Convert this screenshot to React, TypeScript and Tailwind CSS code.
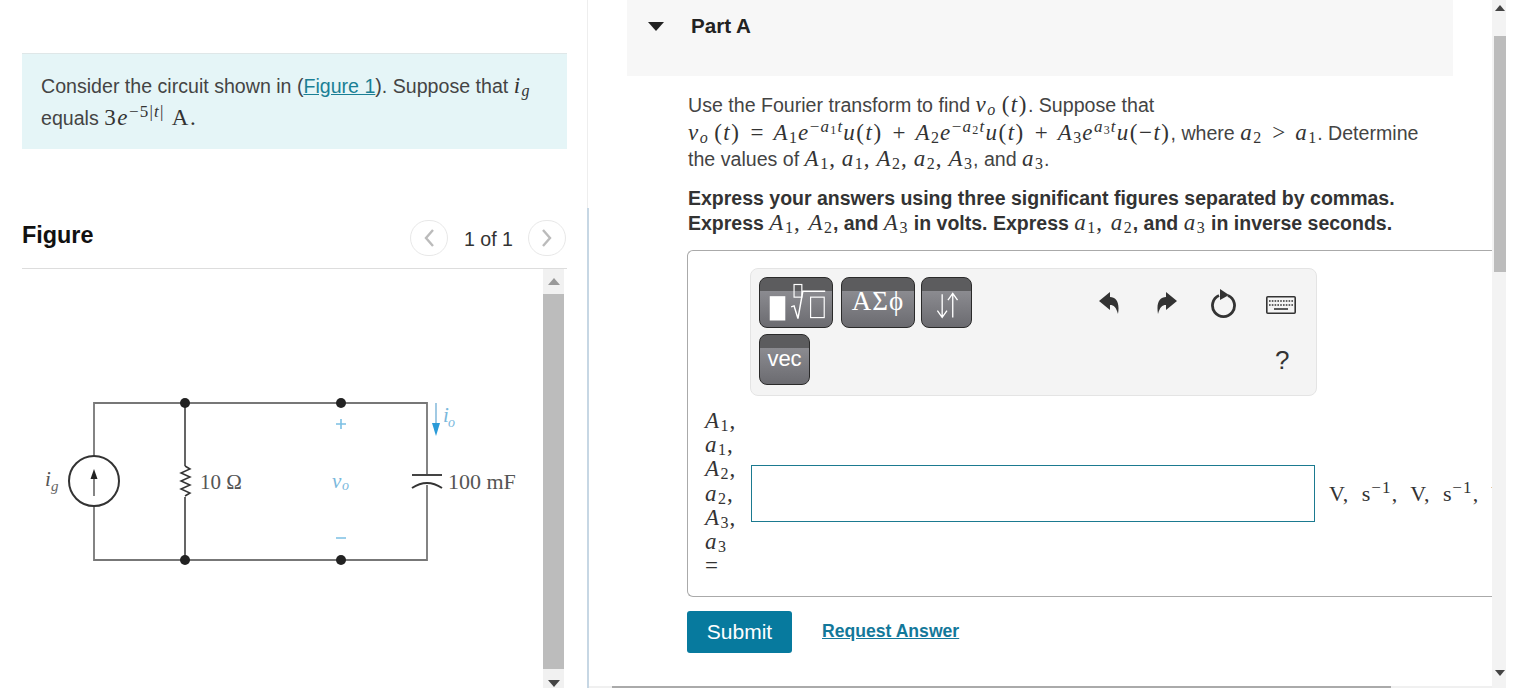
import type { ReactNode } from 'react'

const serif = 'font-["Liberation_Serif",serif]'

function V({ children }: { children: ReactNode }) {
  return <i className={`${serif} text-[23px] tracking-[1.5px] font-normal text-[#333]`}>{children}</i>
}

function Sub({ children }: { children: ReactNode }) {
  return <span className={`${serif} text-[16px] font-normal align-[-3px] leading-none tracking-[1px] text-[#333]`}>{children}</span>
}

function Sup({ children }: { children: ReactNode }) {
  return <span className={`${serif} text-[17px] font-normal align-[8px] leading-none tracking-[1.2px] text-[#333]`}>{children}</span>
}

function R({ children }: { children: ReactNode }) {
  return <span className={`${serif} text-[23px] font-normal tracking-[1.5px] text-[#333]`}>{children}</span>
}

function Op({ children }: { children: ReactNode }) {
  return <span className={`${serif} text-[23px] font-normal mx-[10px] text-[#333]`}>{children}</span>
}

function A({ n }: { n: number }) {
  return (
    <>
      <V>A</V>
      <Sub>{n}</Sub>
    </>
  )
}

function Al({ n }: { n: number }) {
  return (
    <>
      <V>a</V>
      <Sub>{n}</Sub>
    </>
  )
}

function Exp({ minus, n }: { minus?: boolean; n: number }) {
  return (
    <Sup>
      {minus ? '−' : ''}
      <i>a</i>
      <span className="text-[12px] align-[-2px]">{n}</span>
      <i>t</i>
    </Sup>
  )
}

function Comma() {
  return <R>,&nbsp;</R>
}

function Circuit() {
  return (
    <svg viewBox="22 269 521 419" width="521" height="419" className="block">
      <g fill="none" stroke="#777" strokeWidth="1.8">
        <path d="M94 456V403H427V475M427 485V560H94V506" />
        <path d="M185 403V466M185 497V560" stroke="#555" />
      </g>
      <circle cx="94" cy="481" r="25" fill="none" stroke="#333" strokeWidth="2" />
      <path d="M94 496V476" stroke="#666" strokeWidth="1.6" />
      <path d="M94 469l-3.5 10h7z" fill="#222" />
      <path d="M185 466l5 3-9 4 9 4-9 4 9 4-9 4 9 4-5 3" fill="none" stroke="#333" strokeWidth="1.5" />
      <g fill="#222">
        <circle cx="185" cy="403" r="5" />
        <circle cx="341" cy="403" r="5" />
        <circle cx="185" cy="560" r="5" />
        <circle cx="341" cy="560" r="5" />
      </g>
      <path d="M412 475H442" stroke="#444" strokeWidth="2" />
      <path d="M412 488Q427 478 442 488" fill="none" stroke="#333" strokeWidth="2" />
      <path d="M436 403V428" stroke="#7ab4d8" strokeWidth="1.4" />
      <path d="M432 423h8l-4 13z" fill="#2b9bd8" />
      <path d="M336 424h10M341 419v10M336 538h10" stroke="#7cc0e4" strokeWidth="1.6" />
      <g fontFamily="Liberation Serif, serif">
        <text x="45" y="486" fontSize="21" fontStyle="italic" fill="#555">i</text>
        <text x="51" y="491" fontSize="15" fontStyle="italic" fill="#666">g</text>
        <text x="200" y="489" fontSize="21" fill="#555">10 Ω</text>
        <text x="448" y="489" fontSize="22" fill="#555">100 mF</text>
        <text x="332" y="488" fontSize="21" fontStyle="italic" fill="#79b8dc">v</text>
        <text x="342" y="490" fontSize="14" fontStyle="italic" fill="#79b8dc">o</text>
        <text x="443" y="422" fontSize="21" fontStyle="italic" fill="#79b8dc">i</text>
        <text x="448" y="427" fontSize="14" fontStyle="italic" fill="#79b8dc">o</text>
      </g>
    </svg>
  )
}

function ToolButton({ wide, children }: { wide?: boolean; children: ReactNode }) {
  return (
    <div
      className={`${wide ? 'w-[74px]' : 'w-[51px]'} h-[51px] shrink-0 rounded-[8px] border border-[#2a2a2a] bg-[linear-gradient(#5c5c5e_0,#5c5c5e_26%,#8b8b90_27%,#6b6b70_100%)] flex items-center justify-center text-white overflow-hidden`}
    >
      {children}
    </div>
  )
}

function Toolbar() {
  return (
    <div className="ml-[62px] mt-[17px] w-[567px] h-[128px] rounded-[8px] border border-[#e4e4e4] bg-[#f4f4f4] flex">
      <div className="pl-[8px] pt-[8px] w-[340px]">
        <div className="flex gap-[6px]">
          <ToolButton wide>
            <svg viewBox="0 0 74 51" width="74" height="51">
              <rect x="10" y="19" width="16" height="25" fill="#fff" />
              <path d="M32 30l3-1 4 13 5-28h23" fill="none" stroke="#fff" strokeWidth="1.5" />
              <rect x="35" y="7" width="8" height="13" fill="none" stroke="#fff" strokeWidth="1.2" />
              <rect x="52" y="20" width="14" height="21" fill="none" stroke="#fff" strokeWidth="1.2" />
            </svg>
          </ToolButton>
          <div className="ml-[2px]">
            <ToolButton wide>
              <span className={`${serif} text-[27px] tracking-[1px] mb-[2px]`}>ΑΣϕ</span>
            </ToolButton>
          </div>
          <ToolButton>
            <svg viewBox="0 0 51 51" width="51" height="51">
              <path d="M21 17V40M16 34l5 7 5-7M32 41V17M27 23l5-7 5 7" fill="none" stroke="#fff" strokeWidth="1.4" />
            </svg>
          </ToolButton>
        </div>
        <div className="mt-[6px]">
          <ToolButton>
            <span className="font-['Liberation_Sans',sans-serif] text-[22px] mb-[2px]">vec</span>
          </ToolButton>
        </div>
      </div>
      <div className="flex-1 flex flex-col">
        <div className="h-[60px] flex items-center text-[#333]">
          <svg viewBox="0 0 20 22" width="20" height="22" className="ml-[8px] mt-[8px]" fill="#333">
            <path d="M0 9L11 0V5C17 5 21 10 19 22C17 15 15 13 11 13V18Z" />
          </svg>
          <svg viewBox="0 0 20 22" width="20" height="22" className="ml-[38px] mt-[8px]" fill="#333">
            <path d="M20 9L9 0V5C3 5-1 10 1 22C3 15 5 13 9 13V18Z" />
          </svg>
          <svg viewBox="0 0 26 30" width="26" height="30" className="ml-[34px] mt-[10px]" fill="none">
            <path d="M17 6.5A11 11 0 1 1 8 6.5" stroke="#333" strokeWidth="2.8" />
            <path d="M9 0l9 6-9 5z" fill="#333" />
          </svg>
          <svg viewBox="0 0 30 18" width="30" height="18" className="ml-[29px] mt-[12px]">
            <rect x="0.8" y="0.8" width="28.4" height="16.4" rx="1" fill="#f4f4f4" stroke="#333" strokeWidth="1.6" />
            <path d="M3 5h24M3 9h24" stroke="#333" strokeWidth="1.6" strokeDasharray="1.6 1.2" />
            <path d="M8 13h14" stroke="#333" strokeWidth="1.6" />
          </svg>
        </div>
        <div className="pl-[184px] mt-[4px] font-['Liberation_Sans',sans-serif] text-[26px] leading-[54px] text-[#333]">?</div>
      </div>
    </div>
  )
}

function MathLabel() {
  return (
    <div className="w-[46px] shrink-0 ml-[17px] flex flex-col text-[#333] leading-[24px]">
      <div className="h-[24.2px]"><A n={1} /><R>,</R></div>
      <div className="h-[24.2px]"><Al n={1} /><R>,</R></div>
      <div className="h-[24.2px]"><A n={2} /><R>,</R></div>
      <div className="h-[24.2px]"><Al n={2} /><R>,</R></div>
      <div className="h-[24.2px]"><A n={3} /><R>,</R></div>
      <div className="h-[24.2px]"><Al n={3} /></div>
      <div className="h-[24.2px]"><R>=</R></div>
    </div>
  )
}

export default function App() {
  return (
    <div className="flex h-[688px] w-[1534px] overflow-hidden bg-white font-['Liberation_Sans',sans-serif] text-[19.6px] text-[#444]">
      {/* left pane */}
      <aside className="w-[587px] shrink-0 flex flex-col pt-[53px]">
        <div className="ml-[22px] w-[545px] h-[96px] bg-[#e5f5f7] border-t border-[#dfe7e8] px-[19px] pt-[16px] leading-[32px]">
          <div className="h-[32px]">
            Consider the circuit shown in (<span className="text-[#1a7f95] underline">Figure 1</span>). Suppose that{' '}
            <V>i</V>
            <Sub><i>g</i></Sub>
          </div>
          <div className="h-[32px]">
            equals <R>3</R>
            <V>e</V>
            <Sup>−5|<i>t</i>|</Sup>
            <R>&nbsp;A.</R>
          </div>
        </div>
        <div className="ml-[22px] w-[545px] h-[120px] pt-[69px] border-b border-[#ddd] flex items-start justify-between">
          <h2 className="text-[23.4px] leading-[34px] font-bold text-[#111]">Figure</h2>
          <div className="flex items-center mr-[1px] mt-[1px]">
            <div className="w-[38px] h-[36px] rounded-full border border-[#e8e8e8] flex items-center justify-center">
              <svg viewBox="0 0 12 20" width="12" height="20" fill="none"><path d="M10 2L3 10l7 8" stroke="#bbb" strokeWidth="2.4" /></svg>
            </div>
            <span className="mx-[16px] text-[#333] leading-[36px] mt-[2px]">1 of 1</span>
            <div className="w-[38px] h-[36px] -ml-[1px] rounded-full border border-[#e8e8e8] flex items-center justify-center">
              <svg viewBox="0 0 12 20" width="12" height="20" fill="none"><path d="M2 2l7 8-7 8" stroke="#bbb" strokeWidth="2.4" /></svg>
            </div>
          </div>
        </div>
        <div className="flex ml-[22px] flex-1 min-h-0">
          <Circuit />
          <div className="w-[21px] h-full bg-[#f1f1f1] flex flex-col items-center">
            <div className="h-[25px] flex items-center justify-center">
              <div className="w-0 h-0 border-x-[6px] border-x-transparent border-b-[7px] border-b-[#999]" />
            </div>
            <div className="w-full h-[375px] bg-[#bcbcbc]" />
            <div className="flex-1 flex items-end pb-[1px]">
              <div className="w-0 h-0 border-x-[6px] border-x-transparent border-t-[7px] border-t-[#444]" />
            </div>
          </div>
        </div>
      </aside>

      {/* divider */}
      <div className="w-[2px] shrink-0 flex flex-col">
        <div className="h-[208px] border-l border-[#eeeeee]" />
        <div className="flex-1 bg-[#c7d7e4]" />
      </div>

      {/* right pane */}
      <main className="w-[903px] shrink-0 flex flex-col overflow-hidden">
        <div className="flex-1 min-h-0 overflow-hidden">
          <div className="ml-[38px] w-[826px] h-[76px] bg-[#f7f7f7] flex items-start">
            <div className="ml-[21px] mt-[22px] w-0 h-0 border-x-[8px] border-x-transparent border-t-[9px] border-t-[#222]" />
            <span className="ml-[27px] mt-[12px] font-bold text-[#222] text-[20.6px] leading-[28px]">Part A</span>
          </div>
          <div className="ml-[99px] mt-[15px] h-[81px] leading-[27px] whitespace-nowrap">
            <div className="h-[27px]">
              Use the Fourier transform to find <V>v</V><Sub><i>o</i></Sub> <R>(</R><V>t</V><R>)</R>. Suppose that
            </div>
            <div className="h-[27px]">
              <V>v</V><Sub><i>o</i></Sub> <R>(</R><V>t</V><R>)</R><Op>=</Op><A n={1} /><V>e</V><Exp minus n={1} />
              <V>u</V><R>(</R><V>t</V><R>)</R><Op>+</Op><A n={2} /><V>e</V><Exp minus n={2} />
              <V>u</V><R>(</R><V>t</V><R>)</R><Op>+</Op><A n={3} /><V>e</V><Exp n={3} />
              <V>u</V><R>(−</R><V>t</V><R>)</R>, where <Al n={2} /><Op>&gt;</Op><Al n={1} />. Determine
            </div>
            <div className="h-[27px]">
              the values of <A n={1} /><R>,</R> <Al n={1} /><R>,</R> <A n={2} /><R>,</R> <Al n={2} /><R>,</R> <A n={3} />, and <Al n={3} />.
            </div>
          </div>
          <div className="ml-[99px] mt-[14px] h-[50px] font-bold text-[#333] text-[19.5px] whitespace-nowrap">
            <div className="h-[25px] leading-[25px]">Express your answers using three significant figures separated by commas.</div>
            <div className="h-[25px] leading-[23px]">
              Express <A n={1} /><Comma /><A n={2} />, and <A n={3} /> in volts. Express <Al n={1} /><Comma /><Al n={2} />, and <Al n={3} /> in inverse seconds.
            </div>
          </div>

          {/* answer box */}
          <div className="ml-[98px] mt-[14px] w-[805px] h-[347px] rounded-l-[6px] border border-r-0 border-[#aaa] overflow-hidden">
            <Toolbar />
            <div className="flex items-center mt-[13px] w-[900px]">
              <MathLabel />
              <div className="w-[564px] h-[57px] shrink-0 border border-[#1b7a90] bg-white" />
              <div className={`${serif} ml-[14px] text-[22px] text-[#333] whitespace-nowrap tracking-[0.8px]`}>
                V,&nbsp; s<Sup>−1</Sup>,&nbsp; V,&nbsp; s<Sup>−1</Sup>,&nbsp; V,&nbsp; s<Sup>−1</Sup>
              </div>
            </div>
          </div>

          <div className="ml-[98px] mt-[14px] flex items-center">
            <button className="w-[105px] h-[42px] rounded-[3px] bg-[#077a9e] text-white text-[21px]">Submit</button>
            <a className="ml-[30px] text-[17.6px] font-bold text-[#13789a] underline mb-[2px]">Request Answer</a>
          </div>
        </div>
        <div className="h-[2px] shrink-0 bg-[#f0f0f0] flex">
          <div className="ml-[23px] w-[779px] h-full bg-[#aaaaaa]" />
        </div>
      </main>

      {/* page scrollbar */}
      <div className="w-[14px] shrink-0 bg-[#f3f3f3] flex flex-col items-end">
        <div className="w-[12px] h-[36px] flex items-center justify-center pb-[20px]">
          <div className="w-0 h-0 border-x-[5px] border-x-transparent border-b-[6px] border-b-[#444]" />
        </div>
        <div className="w-[12px] h-[236px] bg-[#bcbcbc]" />
        <div className="w-[12px] flex-1 flex items-end justify-center pb-[12px]">
          <div className="w-0 h-0 border-x-[5px] border-x-transparent border-t-[6px] border-t-[#444]" />
        </div>
      </div>
    </div>
  )
}
